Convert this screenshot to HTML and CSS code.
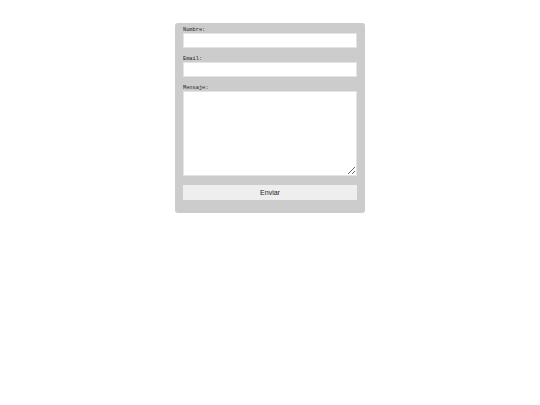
FILE: index.html
```html
<!DOCTYPE html>
<html>
<head>
<meta charset="utf-8">
<link rel="stylesheet" href="styles.css">
</head>
<body>
<form class="form">
  <label class="label" for="nombre">Nombre:</label>
  <input class="field" id="nombre" type="text">
  <label class="label" for="email">Email:</label>
  <input class="field" id="email" type="email">
  <label class="label" for="mensaje">Mensaje:</label>
  <textarea class="field area" id="mensaje"></textarea>
  <button class="btn" type="button">Enviar</button>
</form>
</body>
</html>
```

FILE: styles.css
```css
html, body {
  margin: 0;
  padding: 0;
  background: #fff;
}
body {
  padding-top: 23px;
}
.form {
  box-sizing: border-box;
  width: 190px;
  margin: 0 auto;
  background: #cccccc;
  border-radius: 3px;
  padding: 4px 8px 13px 8px;
  display: flex;
  flex-direction: column;
}
.label {
  font-family: "Liberation Mono", "DejaVu Sans Mono", monospace;
  font-size: 5.3px;
  line-height: 6px;
  height: 6px;
  color: #222;
}
.field {
  box-sizing: border-box;
  width: 174px;
  height: 15px;
  margin: 0 0 8px 0;
  padding: 0;
  border: 1px solid #e4e4e4;
  background: #fff;
  outline: none;
}
.area {
  height: 85px;
  resize: vertical;
  margin-bottom: 9px;
}
.btn {
  box-sizing: border-box;
  width: 174px;
  height: 15px;
  border: none;
  background: #eeeeee;
  font-family: "Liberation Sans", Arial, sans-serif;
  font-size: 7px;
  color: #222;
  padding: 0;
}
```
